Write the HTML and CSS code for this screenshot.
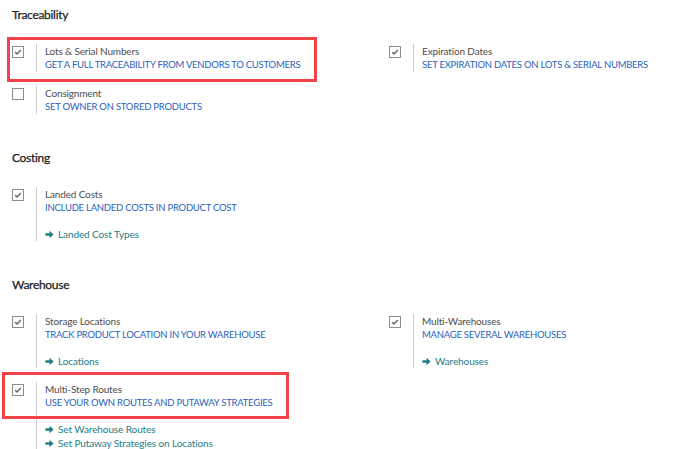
FILE: index.html
```html
<!doctype html>
<html>
  <head>
    <meta charset="utf-8">
    <title>Inventory Settings</title>
    <link rel="stylesheet" href="styles.css">
  </head>
  <body>
    <div class="page">

      <section class="group">
        <h2 class="group-title">Traceability</h2>
        <div class="settings">
          <div class="setting marked">
            <span class="check"><svg viewBox="0 0 12 12"><path d="M2.6 6.2 L4.9 8.4 L9.4 3.6"/></svg></span>
            <div class="setting-text">
              <div class="setting-label">Lots &amp; Serial Numbers</div>
              <div class="setting-help">GET A FULL TRACEABILITY FROM VENDORS TO CUSTOMERS</div>
            </div>
          </div>
          <div class="setting">
            <span class="check"><svg viewBox="0 0 12 12"><path d="M2.6 6.2 L4.9 8.4 L9.4 3.6"/></svg></span>
            <div class="setting-text">
              <div class="setting-label">Expiration Dates</div>
              <div class="setting-help">SET EXPIRATION DATES ON LOTS &amp; SERIAL NUMBERS</div>
            </div>
          </div>
          <div class="setting">
            <span class="check"></span>
            <div class="setting-text">
              <div class="setting-label">Consignment</div>
              <div class="setting-help">SET OWNER ON STORED PRODUCTS</div>
            </div>
          </div>
        </div>
      </section>

      <section class="group">
        <h2 class="group-title">Costing</h2>
        <div class="settings">
          <div class="setting">
            <span class="check"><svg viewBox="0 0 12 12"><path d="M2.6 6.2 L4.9 8.4 L9.4 3.6"/></svg></span>
            <div class="setting-text">
              <div class="setting-label">Landed Costs</div>
              <div class="setting-help">INCLUDE LANDED COSTS IN PRODUCT COST</div>
              <div class="setting-links">
                <a class="link" href="#"><svg class="arrow" viewBox="0 0 10 10"><path d="M0.5 3.5 H5 V0.8 L9.6 5 L5 9.2 V6.5 H0.5 Z"/></svg>Landed Cost Types</a>
              </div>
            </div>
          </div>
        </div>
      </section>

      <section class="group">
        <h2 class="group-title">Warehouse</h2>
        <div class="settings">
          <div class="setting">
            <span class="check"><svg viewBox="0 0 12 12"><path d="M2.6 6.2 L4.9 8.4 L9.4 3.6"/></svg></span>
            <div class="setting-text">
              <div class="setting-label">Storage Locations</div>
              <div class="setting-help">TRACK PRODUCT LOCATION IN YOUR WAREHOUSE</div>
              <div class="setting-links">
                <a class="link" href="#"><svg class="arrow" viewBox="0 0 10 10"><path d="M0.5 3.5 H5 V0.8 L9.6 5 L5 9.2 V6.5 H0.5 Z"/></svg>Locations</a>
              </div>
            </div>
          </div>
          <div class="setting">
            <span class="check"><svg viewBox="0 0 12 12"><path d="M2.6 6.2 L4.9 8.4 L9.4 3.6"/></svg></span>
            <div class="setting-text">
              <div class="setting-label">Multi-Warehouses</div>
              <div class="setting-help">MANAGE SEVERAL WAREHOUSES</div>
              <div class="setting-links">
                <a class="link" href="#"><svg class="arrow" viewBox="0 0 10 10"><path d="M0.5 3.5 H5 V0.8 L9.6 5 L5 9.2 V6.5 H0.5 Z"/></svg>Warehouses</a>
              </div>
            </div>
          </div>
          <div class="setting multistep">
            <span class="check"><svg viewBox="0 0 12 12"><path d="M2.6 6.2 L4.9 8.4 L9.4 3.6"/></svg></span>
            <div class="setting-text">
              <div class="marked">
                <div class="setting-label">Multi-Step Routes</div>
                <div class="setting-help">USE YOUR OWN ROUTES AND PUTAWAY STRATEGIES</div>
              </div>
              <div class="setting-links">
                <a class="link" href="#"><svg class="arrow" viewBox="0 0 10 10"><path d="M0.5 3.5 H5 V0.8 L9.6 5 L5 9.2 V6.5 H0.5 Z"/></svg>Set Warehouse Routes</a>
                <a class="link" href="#"><svg class="arrow" viewBox="0 0 10 10"><path d="M0.5 3.5 H5 V0.8 L9.6 5 L5 9.2 V6.5 H0.5 Z"/></svg>Set Putaway Strategies on Locations</a>
              </div>
            </div>
          </div>
        </div>
      </section>

    </div>
  </body>
</html>
```

FILE: styles.css
```css
body {
  margin: 0;
  background: #ffffff;
  font-family: Lato, "Open Sans", sans-serif;
  font-size: 10px;
  color: #4d4d4d;
}

.page {
  padding: 5px 0 0 12px;
}

.group + .group {
  margin-top: 34px;
}

.group-title {
  margin: 0 0 19px;
  font-size: 12px;
  font-weight: normal;
  letter-spacing: -0.3px;
  line-height: 20px;
  color: #222222;
  -webkit-text-stroke: 0.25px #222222;
}

.settings {
  display: grid;
  grid-template-columns: 377px 1fr;
  row-gap: 14px;
  justify-items: start;
}

.setting {
  display: flex;
  line-height: 14px;
}

.check {
  box-sizing: border-box;
  width: 12px;
  height: 12px;
  margin: 2px 12px 0 0;
  border: 1px solid #8c8c8c;
  background: #ffffff;
  flex: none;
}

.check svg {
  display: block;
  width: 10px;
  height: 10px;
  fill: none;
  stroke: #6b6b6b;
  stroke-width: 1.9;
}

.setting-text {
  border-left: 1px solid #cccccc;
  padding-left: 8px;
}

.setting-label {
  color: #4d4d4d;
  letter-spacing: -0.15px;
}

.setting-help {
  color: #2a5fbd;
  font-size: 9.5px;
  letter-spacing: -0.25px;
}

.setting-links {
  margin-top: 12px;
}

.link {
  display: block;
  color: #1e7d86;
  text-decoration: none;
  letter-spacing: -0.1px;
}

.arrow {
  width: 9px;
  height: 9px;
  margin-right: 4px;
  vertical-align: -1px;
  fill: #1e7d86;
}

/* red annotation boxes */
.marked {
  position: relative;
}

.marked::after {
  content: "";
  position: absolute;
  left: -5px;
  top: -7px;
  right: -17px;
  bottom: -10px;
  border: 3px solid #f2424a;
  pointer-events: none;
}

.multistep .marked::after {
  left: -43px;
  top: -10px;
  bottom: -9px;
}
```
